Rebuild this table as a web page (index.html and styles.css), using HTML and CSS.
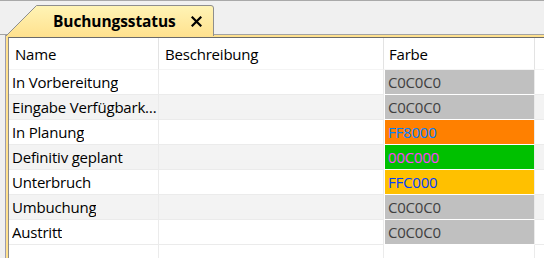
FILE: index.html
```html
<!DOCTYPE html>
<html lang="de">
<head>
<meta charset="utf-8">
<title>Buchungsstatus</title>
<link rel="stylesheet" href="styles.css">
</head>
<body>
<div class="tabbar">
  <div class="tab">
    <svg class="tab-bg" width="210" height="32" viewBox="0 0 210 32">
      <defs>
        <linearGradient id="tg" x1="0" y1="0" x2="0" y2="1">
          <stop offset="0" stop-color="#fff4b6"/>
          <stop offset="1" stop-color="#ffe18e"/>
        </linearGradient>
      </defs>
      <path d="M0.5,31.5 L31.5,0.5 L206,0.5 Q208.5,0.5 208.5,3 L208.5,32 L0,32 Z" fill="url(#tg)"/>
      <path d="M0.5,31.5 L31.5,0.5 L206,0.5 Q208.5,0.5 208.5,3 L208.5,31" fill="none" stroke="#8e8e8e" stroke-width="1"/>
    </svg>
    <span class="tab-title">Buchungsstatus</span>
    <svg class="tab-close" width="11" height="11" viewBox="0 0 11 11">
      <path d="M1.5,1.5 L9.5,9.5 M9.5,1.5 L1.5,9.5" stroke="#000" stroke-width="2.2" stroke-linecap="square"/>
    </svg>
  </div>
</div>
<div class="panel">
  <div class="frame">
    <div class="grid">
      <div class="hcell">Name</div>
      <div class="hcell">Beschreibung</div>
      <div class="hcell">Farbe</div>
      <div class="hcell last"></div>

      <div class="cell"><span class="txt">In Vorbereitung</span></div>
      <div class="cell"></div>
      <div class="cell color"><span class="swatch" style="background:#c0c0c0;color:#3f3f3f">C0C0C0</span></div>
      <div class="cell last"></div>

      <div class="cell alt"><span class="txt">Eingabe Verfügbark…</span></div>
      <div class="cell alt"></div>
      <div class="cell color"><span class="swatch" style="background:#c0c0c0;color:#3f3f3f">C0C0C0</span></div>
      <div class="cell alt last"></div>

      <div class="cell"><span class="txt">In Planung</span></div>
      <div class="cell"></div>
      <div class="cell color"><span class="swatch" style="background:#ff8000;color:#007fff">FF8000</span></div>
      <div class="cell last"></div>

      <div class="cell alt"><span class="txt">Definitiv geplant</span></div>
      <div class="cell alt"></div>
      <div class="cell color"><span class="swatch" style="background:#00c000;color:#ff3fff">00C000</span></div>
      <div class="cell alt last"></div>

      <div class="cell"><span class="txt">Unterbruch</span></div>
      <div class="cell"></div>
      <div class="cell color"><span class="swatch" style="background:#ffc000;color:#003fff">FFC000</span></div>
      <div class="cell last"></div>

      <div class="cell alt"><span class="txt">Umbuchung</span></div>
      <div class="cell alt"></div>
      <div class="cell color"><span class="swatch" style="background:#c0c0c0;color:#3f3f3f">C0C0C0</span></div>
      <div class="cell alt last"></div>

      <div class="cell"><span class="txt">Austritt</span></div>
      <div class="cell"></div>
      <div class="cell color"><span class="swatch" style="background:#c0c0c0;color:#3f3f3f">C0C0C0</span></div>
      <div class="cell last"></div>

      <div class="cell"></div>
      <div class="cell"></div>
      <div class="cell"></div>
      <div class="cell last"></div>
    </div>
  </div>
</div>
</body>
</html>
```

FILE: styles.css
```css
html, body {
  margin: 0;
  padding: 0;
}
body {
  width: 544px;
  height: 258px;
  overflow: hidden;
  background: #f0f0f0;
  font-family: "Open Sans", "Noto Sans", sans-serif;
  font-size: 15px;
  letter-spacing: -0.2px;
  color: #000;
}
.tabbar {
  height: 34px;
  border-top: 1px solid #a9a9a9;
  display: flex;
  align-items: flex-end;
  padding-left: 5px;
  background-image: linear-gradient(to top, #a3a3a3 1px, #f0f0f0 1px);
}
.tab {
  position: relative;
  width: 210px;
  height: 31px;
  display: flex;
  align-items: center;
  margin-bottom: -1px;
}
.tab-bg {
  position: absolute;
  left: 0;
  top: 0;
}
.tab-title {
  position: relative;
  margin-left: 48px;
  font-weight: bold;
  font-size: 15.5px;
  letter-spacing: -0.1px;
  margin-top: 1px;
}
.tab-close {
  position: relative;
  margin-left: 15px;
  margin-top: 2px;
}
.panel {
  margin-left: 5px;
  border-left: 1px solid #9c9cb0;
}
.frame {
  border-left: 2px solid #ffe18e;
  border-top: 2px solid #ffe18e;
}
.grid {
  border-left: 1px solid #8a8a8a;
  border-top: 1px solid #6a6a6a;
  background: #fff;
  display: grid;
  grid-template-columns: 150px 225px 151px 1fr;
  grid-auto-rows: 25px;
  grid-template-rows: 32px;
}
.hcell {
  border-right: 1px solid #e3e3e3;
  border-bottom: 1px solid #f4f4f4;
  display: flex;
  align-items: center;
  padding-left: 6px;
  padding-top: 1px;
  white-space: nowrap;
}
.hcell:nth-child(3) { padding-left: 5px; }
.cell {
  border-right: 1px solid #ebebeb;
  border-bottom: 1px solid #ebebeb;
  display: flex;
  align-items: center;
  padding-left: 3px;
  white-space: nowrap;
  overflow: hidden;
  min-width: 0;
}
.txt {
  overflow: hidden;
  text-overflow: ellipsis;
  white-space: nowrap;
}
.alt { background: #f3f3f3; }
.last { border-right: none; }
.cell.color {
  padding-left: 1px;
  border-bottom-color: #fff;
  align-items: stretch;
}
.swatch {
  flex: 1;
  display: flex;
  align-items: center;
  padding-left: 3px;
}
```
